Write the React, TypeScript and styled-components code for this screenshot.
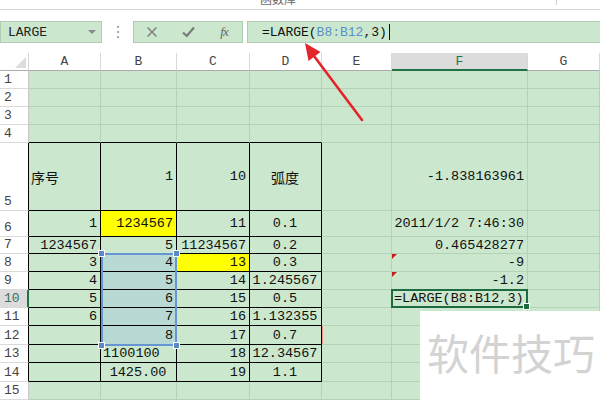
import React from 'react';
import styled, { createGlobalStyle } from 'styled-components';

const GlobalStyle = createGlobalStyle`
  html, body {
    margin: 0;
    padding: 0;
    background: #ffffff;
  }
  body {
    font-family: "Liberation Mono", "Noto Sans CJK SC", monospace;
  }
`;

const SHEET_GREEN = '#cbe7cd';
const GRID_LINE = '#b3d3b5';
const EXCEL_GREEN = '#217346';

const Page = styled.div`
  position: relative;
  width: 600px;
  height: 400px;
  overflow: hidden;
  background: #ffffff;
  display: flex;
  flex-direction: column;
`;

const RibbonEdge = styled.div`
  height: 9px;
  border-bottom: 1px solid #d6d6d6;
  display: flex;
`;

const GroupLabel = styled.div`
  width: 556px;
  height: 5px;
  border-right: 1px solid #cfcfcf;
  display: flex;
  justify-content: center;
  align-items: flex-end;
  font-family: "Noto Sans CJK SC", sans-serif;
  font-size: 12px;
  line-height: 12px;
  color: #6a6a6a;
`;

const FormulaRow = styled.div`
  height: 43px;
  box-sizing: border-box;
  padding-top: 11px;
  display: flex;
  align-items: flex-start;
`;

const NameBox = styled.div`
  width: 102px;
  height: 22px;
  box-sizing: border-box;
  background: ${SHEET_GREEN};
  border: 1px solid #b0ccb2;
  display: flex;
  align-items: center;
  justify-content: space-between;
  padding: 0 5px 0 7px;
  font-size: 13px;
  color: #222;
`;

const DropArrow = styled.span`
  width: 0;
  height: 0;
  border-left: 4px solid transparent;
  border-right: 4px solid transparent;
  border-top: 4px solid #8a8a8a;
`;

const Grip = styled.div`
  width: 31px;
  height: 22px;
  display: flex;
  flex-direction: column;
  align-items: center;
  justify-content: center;
  gap: 3px;
`;

const GripDot = styled.span`
  width: 2px;
  height: 2px;
  background: #a8a8a8;
`;

const ButtonGroup = styled.div`
  width: 110px;
  height: 22px;
  box-sizing: border-box;
  background: ${SHEET_GREEN};
  border: 1px solid #b0ccb2;
  display: flex;
`;

const BarButton = styled.div`
  width: 36px;
  height: 20px;
  display: flex;
  align-items: center;
  justify-content: center;
  color: #777;
`;

const FxLabel = styled.span`
  font-family: "Liberation Serif", serif;
  font-style: italic;
  font-size: 13px;
  color: #666;
  letter-spacing: -1px;
`;

const FormulaInput = styled.div`
  flex: 1;
  margin-left: 4px;
  height: 22px;
  box-sizing: border-box;
  background: ${SHEET_GREEN};
  border: 1px solid #b0ccb2;
  border-right: none;
  display: flex;
  align-items: center;
  padding-left: 14px;
  font-size: 13px;
  color: #111;
  white-space: pre;
`;

const RefText = styled.span`
  color: #5b8fc9;
`;

const Caret = styled.span`
  width: 1px;
  height: 16px;
  margin-left: 2px;
  background: #111;
`;

const Sheet = styled.div`
  display: grid;
  grid-template-columns: 29px 72px 76px 73px 72px 70px 136px 72px;
  grid-template-rows: 18px 18px 18px 18px 18px 68px 26px 17px 18px 18px 18px 18px 19px 18px 19px 18px;
  background: ${SHEET_GREEN};
`;

const Corner = styled.div`
  grid-row: 1;
  grid-column: 1;
  background: #fff;
  border-bottom: 1px solid #ababab;
  border-right: 1px solid #d6d6d6;
  box-sizing: border-box;
  display: flex;
  justify-content: flex-end;
  align-items: flex-end;
  padding: 0 2px 2px 0;

  &::after {
    content: '';
    width: 11px;
    height: 11px;
    background: #dcdcdc;
    clip-path: polygon(100% 0, 100% 100%, 0 100%);
  }
`;

const ColHead = styled.div<{ $col: number; $active?: boolean }>`
  grid-row: 1;
  grid-column: ${({ $col }) => $col};
  box-sizing: border-box;
  background: ${({ $active }) => ($active ? '#dcdcdc' : '#ffffff')};
  border-right: 1px solid #d8d8d8;
  border-bottom: ${({ $active }) => ($active ? `2px solid ${EXCEL_GREEN}` : '1px solid #ababab')};
  display: flex;
  align-items: center;
  justify-content: center;
  font-size: 13px;
  color: ${({ $active }) => ($active ? EXCEL_GREEN : '#444')};
`;

const RowHead = styled.div<{ $row: number; $active?: boolean; $edge?: boolean }>`
  grid-row: ${({ $row }) => $row + 1};
  grid-column: 1;
  box-sizing: border-box;
  background: ${({ $active }) => ($active ? '#dcdcdc' : '#ffffff')};
  border-bottom: 1px solid #dadada;
  border-right: ${({ $active, $edge }) =>
    $active ? `2px solid ${EXCEL_GREEN}` : $edge ? '1px solid #000' : '1px solid #c6c6c6'};
  display: flex;
  align-items: flex-end;
  padding: 0 0 1px 4px;
  font-size: 13px;
  line-height: 15px;
  color: ${({ $active }) => ($active ? '#3b6e50' : '#444')};
`;

type Align = 'l' | 'r' | 'c';

const Cell = styled.div<{
  $row: number;
  $col: number;
  $align: Align;
  $bg?: string;
  $right: string;
  $bottom: string;
  $flag?: boolean;
  $cjk?: boolean;
  $mark?: boolean;
}>`
  position: relative;
  grid-row: ${({ $row }) => $row + 1};
  grid-column: ${({ $col }) => $col + 1};
  box-sizing: border-box;
  background: ${({ $bg }) => $bg || 'transparent'};
  border-right: 1px solid ${({ $right }) => $right};
  border-bottom: 1px solid ${({ $bottom }) => $bottom};
  display: flex;
  align-items: center;
  justify-content: ${({ $align }) =>
    $align === 'l' ? 'flex-start' : $align === 'c' ? 'center' : 'flex-end'};
  padding: 0 3px 0 2px;
  white-space: nowrap;
  font-family: ${({ $cjk }) =>
    $cjk ? '"Noto Sans CJK SC", sans-serif' : '"Liberation Mono", "Noto Sans CJK SC", monospace'};
  font-size: ${({ $cjk }) => ($cjk ? '14px' : '13.5px')};
  color: #111;

  &::before {
    content: '';
    display: ${({ $flag }) => ($flag ? 'block' : 'none')};
    position: absolute;
    top: 0;
    left: 0;
    border-top: 5px solid #c41d1d;
    border-right: 5px solid transparent;
  }

  &::after {
    content: '';
    display: ${({ $mark }) => ($mark ? 'block' : 'none')};
    position: absolute;
    top: 0;
    bottom: 0;
    right: -2px;
    width: 1px;
    background: #f0957a;
    z-index: 2;
  }
`;

const SelectionBox = styled.div`
  position: relative;
  grid-column: 3;
  grid-row: 9 / 14;
  margin: -1px 0 -1px 0;
  border: 2px solid #6794d2;
  pointer-events: none;
  z-index: 3;
`;

const Handle = styled.span<{ $x: 'l' | 'r'; $y: 't' | 'b' }>`
  position: absolute;
  width: 5px;
  height: 5px;
  background: #5d88c8;
  border: 1px solid #ffffff;
  ${({ $x }) => ($x === 'l' ? 'left: -5px;' : 'right: -5px;')}
  ${({ $y }) => ($y === 't' ? 'top: -5px;' : 'bottom: -5px;')}
`;

const ActiveCell = styled.div`
  position: relative;
  grid-column: 7;
  grid-row: 11;
  margin: -1px 0 0 -1px;
  border: 2px solid #1f6b41;
  pointer-events: none;
  z-index: 3;
`;

const FillHandle = styled.span`
  position: absolute;
  right: -4px;
  bottom: -4px;
  width: 5px;
  height: 5px;
  background: #1f6b41;
  border: 1px solid #ffffff;
`;

const ArrowLayer = styled.svg`
  position: absolute;
  left: 0;
  top: 0;
  pointer-events: none;
  z-index: 5;
`;

const Watermark = styled.div`
  position: absolute;
  left: 420px;
  top: 311px;
  width: 180px;
  height: 89px;
  background: #ffffff;
  box-sizing: border-box;
  padding: 20px 0 0 7px;
  font-family: "Noto Sans CJK SC", sans-serif;
  font-size: 42px;
  line-height: 42px;
  color: #d3d3d3;
  white-space: nowrap;
  z-index: 6;
`;

type CellDef = { t: string; a?: Align; bg?: string; flag?: boolean; cjk?: boolean; mark?: boolean };
type RowDef = Record<number, CellDef>;

const YELLOW = '#ffff00';
const SEL = '#b9d9d5';

// column index: 1=A ... 7=G
const rows: RowDef[] = [
  {},
  {},
  {},
  {},
  {
    1: { t: '序号', a: 'l', cjk: true },
    2: { t: '1' },
    3: { t: '10' },
    4: { t: '弧度', a: 'c', cjk: true },
    6: { t: '-1.838163961' },
  },
  {
    1: { t: '1' },
    2: { t: '1234567', bg: YELLOW },
    3: { t: '11' },
    4: { t: '0.1', a: 'c' },
    6: { t: '2011/1/2 7:46:30' },
  },
  {
    1: { t: '1234567' },
    2: { t: '5' },
    3: { t: '11234567' },
    4: { t: '0.2', a: 'c' },
    6: { t: '0.465428277' },
  },
  {
    1: { t: '3' },
    2: { t: '4', bg: SEL },
    3: { t: '13', bg: YELLOW },
    4: { t: '0.3', a: 'c' },
    6: { t: '-9', flag: true },
  },
  {
    1: { t: '4' },
    2: { t: '5', bg: SEL },
    3: { t: '14' },
    4: { t: '1.245567', a: 'c' },
    6: { t: '-1.2', flag: true },
  },
  {
    1: { t: '5' },
    2: { t: '6', bg: SEL },
    3: { t: '15' },
    4: { t: '0.5', a: 'c' },
    6: { t: '=LARGE(B8:B12,3)', a: 'l' },
  },
  {
    1: { t: '6' },
    2: { t: '7', bg: SEL },
    3: { t: '16' },
    4: { t: '1.132355', a: 'c' },
  },
  {
    2: { t: '8', bg: SEL },
    3: { t: '17' },
    4: { t: '0.7', a: 'c', mark: true },
  },
  {
    2: { t: '1100100', a: 'l' },
    3: { t: '18' },
    4: { t: '12.34567', a: 'c' },
  },
  {
    2: { t: '1425.00', a: 'c' },
    3: { t: '19' },
    4: { t: '1.1', a: 'c' },
  },
  {},
];

const COLUMNS = ['A', 'B', 'C', 'D', 'E', 'F', 'G'];

const inTable = (r: number, c: number) => r >= 5 && r <= 14 && c >= 1 && c <= 4;

const App: React.FC = () => {
  return (
    <>
      <GlobalStyle />
      <Page>
        <RibbonEdge>
          <GroupLabel>函数库</GroupLabel>
        </RibbonEdge>

        <FormulaRow>
          <NameBox>
            LARGE
            <DropArrow />
          </NameBox>
          <Grip>
            <GripDot />
            <GripDot />
            <GripDot />
          </Grip>
          <ButtonGroup>
            <BarButton>
              <svg width="12" height="12" viewBox="0 0 12 12">
                <path d="M1.5 1.5 L10.5 10.5 M10.5 1.5 L1.5 10.5" stroke="#7a7a7a" strokeWidth="1.4" />
              </svg>
            </BarButton>
            <BarButton>
              <svg width="13" height="12" viewBox="0 0 13 12">
                <path d="M1 6.5 L4.8 10 L12 1.5" stroke="#7a7a7a" strokeWidth="2.2" fill="none" />
              </svg>
            </BarButton>
            <BarButton>
              <FxLabel>fx</FxLabel>
            </BarButton>
          </ButtonGroup>
          <FormulaInput>
            =LARGE(<RefText>B8:B12</RefText>,3)
            <Caret />
          </FormulaInput>
        </FormulaRow>

        <Sheet>
          <Corner />
          {COLUMNS.map((name, i) => (
            <ColHead key={name} $col={i + 2} $active={name === 'F'}>
              {name}
            </ColHead>
          ))}

          {rows.map((row, ri) => {
            const r = ri + 1;
            return (
              <React.Fragment key={r}>
                <RowHead $row={r} $active={r === 10} $edge={r >= 5 && r <= 14}>
                  {r}
                </RowHead>
                {COLUMNS.map((_, ci) => {
                  const c = ci + 1;
                  const def = row[c];
                  const right = inTable(r, c) ? '#000' : GRID_LINE;
                  const bottom = inTable(r, c) || (r === 4 && c <= 4) ? '#000' : GRID_LINE;
                  return (
                    <Cell
                      key={c}
                      $row={r}
                      $col={c}
                      $align={def?.a || 'r'}
                      $bg={def?.bg}
                      $right={right}
                      $bottom={bottom}
                      $flag={def?.flag}
                      $cjk={def?.cjk}
                      $mark={def?.mark}
                    >
                      {def?.t}
                    </Cell>
                  );
                })}
              </React.Fragment>
            );
          })}

          <SelectionBox>
            <Handle $x="l" $y="t" />
            <Handle $x="r" $y="t" />
            <Handle $x="l" $y="b" />
            <Handle $x="r" $y="b" />
          </SelectionBox>
          <ActiveCell>
            <FillHandle />
          </ActiveCell>
        </Sheet>

        <ArrowLayer width="600" height="400" viewBox="0 0 600 400">
          <line x1="362" y1="120" x2="314" y2="56" stroke="#e2262b" strokeWidth="2.6" strokeLinecap="round" />
          <polygon points="305,43 320.5,52 308.5,61" fill="#e2262b" />
        </ArrowLayer>

        <Watermark>软件技巧</Watermark>
      </Page>
    </>
  );
};

export default App;
